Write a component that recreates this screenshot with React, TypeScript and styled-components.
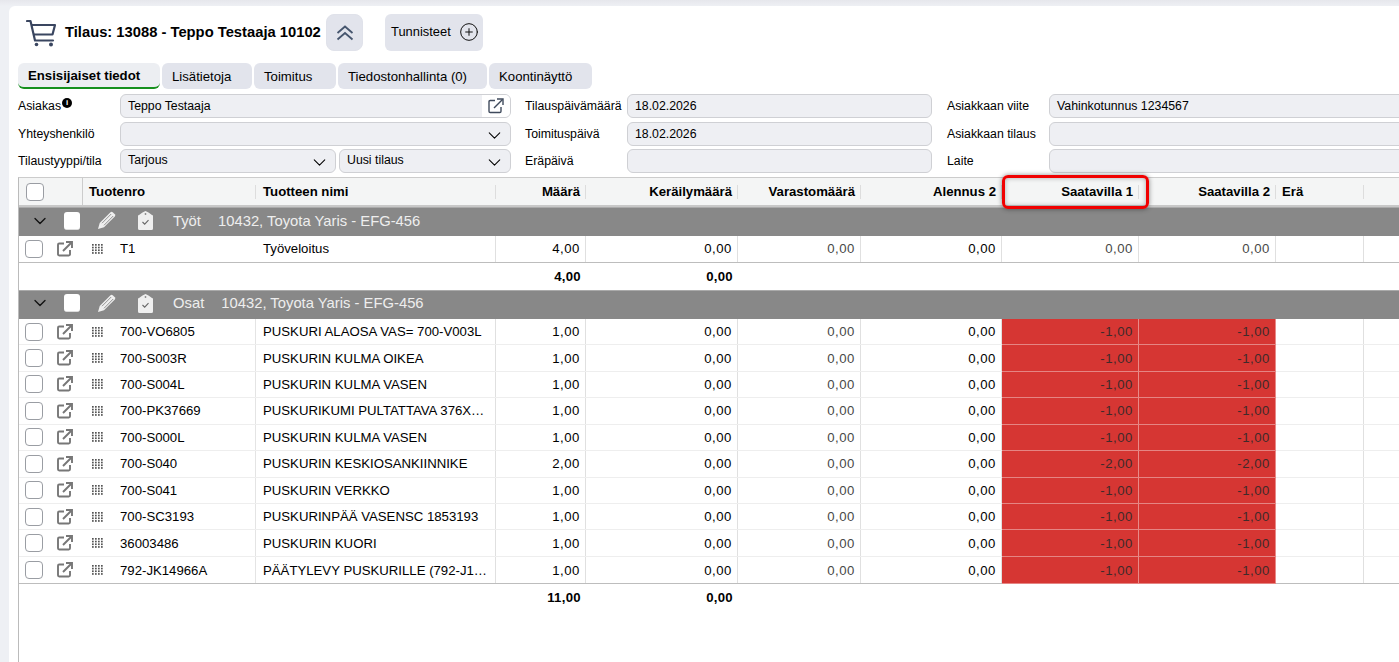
import React from 'react';
import styled, { createGlobalStyle } from 'styled-components';
import { ChevronDown, CirclePlus } from 'lucide-react';

const Global = createGlobalStyle`
  html, body { margin: 0; padding: 0; height: 662px; overflow: hidden; background: #eef0f4; }
  body { font-family: "Liberation Sans", Arial, sans-serif; font-size: 12.3px; color: #000; }
  * { box-sizing: border-box; }
`;

const Page = styled.div`
  height: 662px;
  width: 1399px;
  padding: 6px 0 0 9px;
  overflow: hidden;
  background: linear-gradient(#e6e7ec, #eef0f4 6px);
`;
const Panel = styled.main`
  height: 656px;
  background: #fff;
  border-top-left-radius: 6px;
  padding: 8px 0 0 9px;
  display: flex;
  flex-direction: column;
`;
const TopBar = styled.header`
  display: flex;
  align-items: center;
  height: 37px;
  padding-left: 8px;
`;
const CartWrap = styled.div`
  width: 30px;
  height: 28px;
  margin-right: 9px;
  display: flex;
`;
const Title = styled.h1`
  margin: -2px 5px 0 0;
  font-size: 14.75px;
  font-weight: 700;
  white-space: nowrap;
  width: 256px;
`;
const IconBtn = styled.button`
  width: 37px;
  height: 37px;
  border: 1px solid #e0e2ea;
  border-radius: 8px;
  background: #e2e4ec;
  padding: 0;
  display: flex;
  align-items: center;
  justify-content: center;
`;
const TagBtn = styled.button`
  width: 98px;
  height: 37px;
  margin-left: 22px;
  border: 0;
  border-radius: 6px;
  background: #e2e4ec;
  padding: 0 4px 2px 6px;
  display: flex;
  align-items: center;
  justify-content: space-between;
  font: 12.9px "Liberation Sans", Arial, sans-serif;
  color: #000;
`;
const Tabs = styled.nav`
  display: flex;
  margin-top: 12px;
  gap: 2px;
`;
const Tab = styled.div<{ $w: number; $active?: boolean }>`
  width: ${p => p.$w}px;
  height: 26px;
  padding: ${p => (p.$active ? '1px' : '0')} 0 0 10px;
  display: flex;
  align-items: center;
  border-radius: 6px;
  background: ${p => (p.$active ? '#eceef2' : '#e2e4ec')};
  font-size: 13.2px;
  font-weight: ${p => (p.$active ? 700 : 400)};
  border-bottom: ${p => (p.$active ? '2px solid #16901e' : '0')};
  white-space: nowrap;
`;
const Form = styled.section`
  display: grid;
  grid-template-columns: 493px 408px 1fr;
  column-gap: 14px;
  margin-top: 5px;
`;
const FormCol = styled.div`
  display: grid;
  grid-template-columns: 102px 305px;
  grid-auto-rows: 24px;
  row-gap: 3.5px;
  align-items: center;
`;
const FormColWide = styled(FormCol)<{ $first?: boolean }>`
  grid-template-columns: ${p => (p.$first ? '102px 391px' : '102px 360px')};
`;
const Label = styled.label`
  display: flex;
  align-items: flex-start;
  white-space: nowrap;
`;
const InfoDot = styled.span`
  width: 10px;
  height: 10px;
  border-radius: 50%;
  background: #000;
  color: #fff;
  font-size: 8px;
  font-weight: 700;
  line-height: 10px;
  text-align: center;
  margin: -1px 0 0 1px;
`;
const Field = styled.div`
  height: 24px;
  border: 1px solid #cfd0d4;
  border-radius: 6px;
  background: #eeeff3;
  padding: 0 5px 0 7px;
  display: flex;
  align-items: center;
  justify-content: space-between;
  overflow: hidden;
  white-space: nowrap;
`;
const LinkField = styled(Field)`
  padding-right: 0;
`;
const SelectField = styled(Field)`
  padding-bottom: 2px;
`;
const LinkBox = styled.span`
  width: 28px;
  height: 24px;
  background: #fff;
  display: flex;
  align-items: center;
  justify-content: center;
`;
const Pair = styled.div`
  display: grid;
  grid-template-columns: 216px 172px;
  column-gap: 3px;
`;
const SelectChevron = styled(ChevronDown)`
  margin: 2px 0 -2px 0;
  flex: none;
`;
const TableWrap = styled.section`
  position: relative;
  flex: 1;
  margin-top: 4px;
  border-top: 1px solid #ccc;
  border-left: 1px solid #bbb;
  font-size: 13.2px;
`;
const COLS = '64px 173px 240px 90px 152px 123px 141px 137px 137px 88px 1fr';
const Head = styled.div`
  display: grid;
  grid-template-columns: ${COLS};
  height: 29px;
  background: #f4f5f5;
  border-bottom: 2px solid #c8c8c8;
  align-items: center;
`;
const HeadSelect = styled.div`
  height: 100%;
  padding-left: 7px;
  border-right: 1px solid #ccc;
  display: flex;
  align-items: center;
`;
const HeadCell = styled.div<{ $right?: boolean }>`
  height: 14px;
  line-height: 14px;
  font-weight: 700;
  border-right: 1px solid #ddd;
  padding: 0 5px 0 6px;
  text-align: ${p => (p.$right ? 'right' : 'left')};
  white-space: nowrap;
`;
const HeadName = styled(HeadCell)`
  padding-left: 7px;
`;
const Group = styled.div`
  height: 29px;
  background: #888;
  border-top: 1px solid #aaa;
  color: #eee;
  font-size: 14.8px;
  display: flex;
  align-items: center;
  padding: 0 0 3px 16px;
  white-space: nowrap;
`;
const GroupChevron = styled(ChevronDown)`
  color: #111;
  margin: 0 14.5px 0 -5.5px;
  flex: none;
`;
const GroupCheck = styled.span`
  width: 16px;
  height: 18px;
  border-radius: 3px;
  background: #fff;
  border-bottom: 1px solid #ddd;
  margin-right: 17px;
`;
const GroupIconSlot = styled.span<{ $gap: number }>`
  display: flex;
  margin-right: ${p => p.$gap}px;
`;
const GroupName = styled.span`
  margin-right: 17px;
`;
const Row = styled.div<{ $h?: number }>`
  display: grid;
  grid-template-columns: ${COLS};
  height: ${p => p.$h ?? 26.44}px;
  border-bottom: 1px solid #eee;
`;
const Rows = styled.div`
  border-bottom: 1.5px solid #bdbdbd;
  & > div:last-child { border-bottom: 0; }
`;
const SelectCell = styled.div`
  padding-left: 6px;
  display: flex;
  align-items: center;
  gap: 14px;
`;
const Box = styled.span`
  width: 18px;
  height: 18px;
  flex: none;
  border: 1.5px solid #9a9da3;
  border-radius: 4px;
  background: #fff;
`;
const CodeCell = styled.div<{ $divider?: boolean }>`
  padding-left: 9px;
  display: flex;
  align-items: center;
  gap: 16px;
  border-right: 1px solid ${p => (p.$divider ? '#e4e4e4' : 'transparent')};
`;
const NameCell = styled.div`
  padding: 0 6px 0 7px;
  display: flex;
  align-items: center;
  border-right: 1px solid #e0e0e0;
  white-space: nowrap;
`;
const NumCell = styled.div<{ $muted?: boolean; $red?: boolean }>`
  display: flex;
  align-items: center;
  justify-content: flex-end;
  padding-right: 5px;
  letter-spacing: 0.55px;
  border-right: 1px solid ${p => (p.$red ? '#e88a88' : '#e0e0e0')};
  color: ${p => (p.$red ? '#402a2a' : p.$muted ? '#484848' : '#000')};
  background: ${p => (p.$red ? '#d63633' : 'transparent')};
  box-shadow: ${p => (p.$red ? '0 1px 0 #e58583' : 'none')};
`;
const EmptyCell = styled.div<{ $line?: boolean }>`
  border-right: ${p => (p.$line ? '1px solid #e0e0e0' : '0')};
`;
const TotalRow = styled.div<{ $h: number }>`
  display: grid;
  grid-template-columns: ${COLS};
  height: ${p => p.$h}px;
`;
const TotalCell = styled.div`
  display: flex;
  align-items: center;
  justify-content: flex-end;
  padding-right: 5px;
  letter-spacing: 0.3px;
  font-weight: 700;
`;
const Highlight = styled.div`
  position: absolute;
  left: 983px;
  top: -3px;
  width: 147px;
  height: 34px;
  border: 3px solid #f00000;
  border-radius: 6px;
  box-shadow: 0 0 5px rgba(0, 0, 0, 0.45), inset 0 0 5px rgba(0, 0, 0, 0.3);
  pointer-events: none;
`;

const Cart = () => (
  <svg width="30" height="28" viewBox="0 0 30 28" fill="none" stroke="#3a4660" strokeWidth="2.2" strokeLinecap="round" strokeLinejoin="round">
    <path d="M1 2h3.5L9 21.5h18" />
    <path d="M6 6h23l-2.5 9.5H8" />
    <circle cx="10.5" cy="25.5" r="1.8" fill="#3a4660" stroke="none" />
    <circle cx="25" cy="25.5" r="2" fill="#3a4660" stroke="none" />
  </svg>
);
const DoubleUp = () => (
  <svg width="18" height="16" viewBox="0 0 18 16" fill="none" stroke="#46566e" strokeWidth="1.8">
    <path d="M1.5 8 9 1.5 16.5 8" />
    <path d="M1.5 14.5 9 8l7.5 6.5" />
  </svg>
);
const OpenIcon = ({ color = '#777', w = 1.9 }: { color?: string; w?: number }) => (
  <svg width="16" height="16" viewBox="0 0 16 16" fill="none" stroke={color} strokeWidth={w}>
    <path d="M7 2.5H2.2a1.2 1.2 0 0 0-1.2 1.2v9.6a1.2 1.2 0 0 0 1.2 1.2h9.6a1.2 1.2 0 0 0 1.2-1.2V9" />
    <path d="M6 10 14.5 1.5" />
    <path d="M9 1h6v6" />
  </svg>
);
const DotGrid = () => (
  <svg width="12" height="10" viewBox="0 0 12 10" fill="#555">
    {[0, 3, 6, 9].flatMap(x =>
      [0, 2.7, 5.4, 8.1].map(y => <rect key={`${x}-${y}`} x={x} y={y} width="1.7" height="1.7" />),
    )}
  </svg>
);
const Pencil = () => (
  <svg width="19" height="19" viewBox="0 0 19 19" fill="#efefef">
    <path d="M13.5 1.2a1.6 1.6 0 0 1 2.2 0l2.1 2.1a1.6 1.6 0 0 1 0 2.2L7 16.3 1 18l1.7-6z" />
    <path d="M5 12.2 14.2 3M7 14.3 16.2 5" stroke="#888" strokeWidth="0.9" fill="none" />
  </svg>
);
const ClipTag = () => (
  <svg width="15" height="19" viewBox="0 0 15 19">
    <path d="M4.5 1.5 7.5 0l3 1.5L14 4a1 1 0 0 1 1 1v12.5a1.5 1.5 0 0 1-1.5 1.5h-12A1.5 1.5 0 0 1 0 17.5V5a1 1 0 0 1 1-1z" fill="#efefef" />
    <circle cx="7.5" cy="3" r="0.9" fill="#888" />
    <path d="m4.5 11 2.2 2.2 3.8-4" fill="none" stroke="#666" strokeWidth="1.1" />
  </svg>
);

const parts: [string, string, string, string][] = [
  ['700-VO6805', 'PUSKURI ALAOSA VAS= 700-V003L', '1,00', '-1,00'],
  ['700-S003R', 'PUSKURIN KULMA OIKEA', '1,00', '-1,00'],
  ['700-S004L', 'PUSKURIN KULMA VASEN', '1,00', '-1,00'],
  ['700-PK37669', 'PUSKURIKUMI PULTATTAVA 376X…', '1,00', '-1,00'],
  ['700-S000L', 'PUSKURIN KULMA VASEN', '1,00', '-1,00'],
  ['700-S040', 'PUSKURIN KESKIOSANKIINNIKE', '2,00', '-2,00'],
  ['700-S041', 'PUSKURIN VERKKO', '1,00', '-1,00'],
  ['700-SC3193', 'PUSKURINPÄÄ VASENSC 1853193', '1,00', '-1,00'],
  ['36003486', 'PUSKURIN KUORI', '1,00', '-1,00'],
  ['792-JK14966A', 'PÄÄTYLEVY PUSKURILLE (792-J1…', '1,00', '-1,00'],
];

const GroupBar = ({ name, info }: { name: string; info: string }) => (
  <Group>
    <GroupChevron size={20} strokeWidth={1.6} />
    <GroupCheck />
    <GroupIconSlot $gap={22}><Pencil /></GroupIconSlot>
    <GroupIconSlot $gap={20}><ClipTag /></GroupIconSlot>
    <GroupName>{name}</GroupName>
    <span>{info}</span>
  </Group>
);

const DataRow = ({ code, title, qty, stock, red, divider, h }: {
  code: string; title: string; qty: string; stock: string; red?: boolean; divider?: boolean; h?: number;
}) => (
  <Row $h={h}>
    <SelectCell><Box /><OpenIcon /></SelectCell>
    <CodeCell $divider={divider}><DotGrid /><span>{code}</span></CodeCell>
    <NameCell>{title}</NameCell>
    <NumCell>{qty}</NumCell>
    <NumCell>0,00</NumCell>
    <NumCell $muted>0,00</NumCell>
    <NumCell>0,00</NumCell>
    <NumCell $muted $red={red}>{stock}</NumCell>
    <NumCell $muted $red={red}>{stock}</NumCell>
    <EmptyCell $line />
    <EmptyCell />
  </Row>
);

const Totals = ({ qty, h }: { qty: string; h: number }) => (
  <TotalRow $h={h}>
    <span /><span /><span />
    <TotalCell>{qty}</TotalCell>
    <TotalCell>0,00</TotalCell>
  </TotalRow>
);

export default function App() {
  return (
    <Page>
      <Global />
      <Panel>
        <TopBar>
          <CartWrap><Cart /></CartWrap>
          <Title>Tilaus: 13088 - Teppo Testaaja 10102</Title>
          <IconBtn aria-label="Kutista"><DoubleUp /></IconBtn>
          <TagBtn>Tunnisteet<CirclePlus size={20} strokeWidth={1.2} color="#111" /></TagBtn>
        </TopBar>
        <Tabs>
          <Tab $w={142} $active>Ensisijaiset tiedot</Tab>
          <Tab $w={90}>Lisätietoja</Tab>
          <Tab $w={82}>Toimitus</Tab>
          <Tab $w={149}>Tiedostonhallinta (0)</Tab>
          <Tab $w={103}>Koontinäyttö</Tab>
        </Tabs>
        <Form>
          <FormColWide $first>
            <Label>Asiakas<InfoDot>i</InfoDot></Label>
            <LinkField>Teppo Testaaja<LinkBox><OpenIcon color="#3f4a5c" w={1.4} /></LinkBox></LinkField>
            <Label>Yhteyshenkilö</Label>
            <Field><span /><SelectChevron size={21} strokeWidth={1.2} /></Field>
            <Label>Tilaustyyppi/tila</Label>
            <Pair>
              <SelectField>Tarjous<SelectChevron size={21} strokeWidth={1.2} /></SelectField>
              <SelectField>Uusi tilaus<SelectChevron size={21} strokeWidth={1.2} /></SelectField>
            </Pair>
          </FormColWide>
          <FormCol>
            <Label>Tilauspäivämäärä</Label>
            <Field>18.02.2026</Field>
            <Label>Toimituspäivä</Label>
            <Field>18.02.2026</Field>
            <Label>Eräpäivä</Label>
            <Field />
          </FormCol>
          <FormColWide>
            <Label>Asiakkaan viite</Label>
            <Field>Vahinkotunnus 1234567</Field>
            <Label>Asiakkaan tilaus</Label>
            <Field />
            <Label>Laite</Label>
            <Field />
          </FormColWide>
        </Form>
        <TableWrap>
          <Head>
            <HeadSelect><Box /></HeadSelect>
            <HeadCell>Tuotenro</HeadCell>
            <HeadName>Tuotteen nimi</HeadName>
            <HeadCell $right>Määrä</HeadCell>
            <HeadCell $right>Keräilymäärä</HeadCell>
            <HeadCell $right>Varastomäärä</HeadCell>
            <HeadCell $right>Alennus 2</HeadCell>
            <HeadCell $right>Saatavilla 1</HeadCell>
            <HeadCell $right>Saatavilla 2</HeadCell>
            <HeadCell>Erä</HeadCell>
          </Head>
          <GroupBar name="Työt" info="10432, Toyota Yaris - EFG-456" />
          <Rows>
            <DataRow code="T1" title="Työveloitus" qty="4,00" stock="0,00" h={25.5} />
          </Rows>
          <Totals qty="4,00" h={27.4} />
          <GroupBar name="Osat" info="10432, Toyota Yaris - EFG-456" />
          <Rows>
            {parts.map(([code, title, qty, stock]) => (
              <DataRow key={code + title} code={code} title={title} qty={qty} stock={stock} red divider />
            ))}
          </Rows>
          <Totals qty="11,00" h={26} />
          <Highlight />
        </TableWrap>
      </Panel>
    </Page>
  );
}
